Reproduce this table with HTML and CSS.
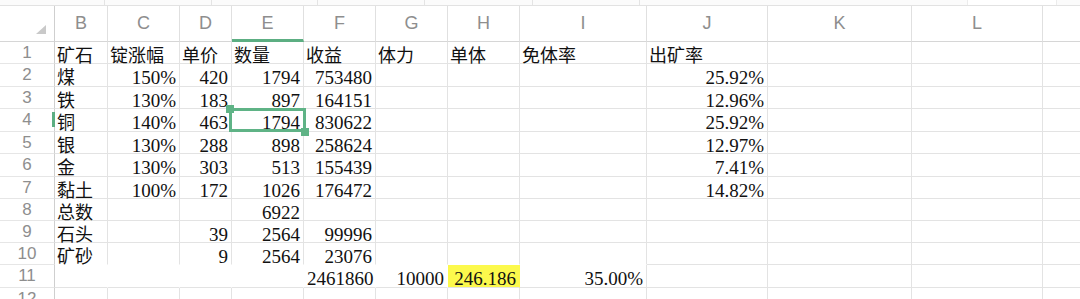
FILE: index.html
```html
<!DOCTYPE html>
<html lang="zh">
<head>
<meta charset="utf-8">
<title>Sheet</title>
<link rel="stylesheet" href="styles.css">
</head>
<body>
<div class="bar"><span class="s1"></span><span class="s2"></span><span class="s3"></span><span class="s4"></span><span class="s5"></span><span class="s6"></span><span class="fill"></span><span class="box"></span></div>
<div class="sheet">
  <div class="h corner"><span class="tri"></span></div>
  <div class="h">B</div><div class="h">C</div><div class="h">D</div><div class="h sel">E</div><div class="h">F</div><div class="h">G</div><div class="h">H</div><div class="h">I</div><div class="h">J</div><div class="h">K</div><div class="h">L</div><div class="h last"></div>

  <div class="r">1</div>
  <div class="c t">矿石</div><div class="c t">锭涨幅</div><div class="c t">单价</div><div class="c t">数量</div><div class="c t">收益</div><div class="c t">体力</div><div class="c t">单体</div><div class="c t">免体率</div><div class="c t">出矿率</div><div class="c"></div><div class="c"></div><div class="c last"></div>

  <div class="r">2</div>
  <div class="c t">煤</div><div class="c n">150%</div><div class="c n">420</div><div class="c n">1794</div><div class="c n">753480</div><div class="c"></div><div class="c"></div><div class="c"></div><div class="c n">25.92%</div><div class="c"></div><div class="c"></div><div class="c last"></div>

  <div class="r">3</div>
  <div class="c t">铁</div><div class="c n">130%</div><div class="c n">183</div><div class="c n">897</div><div class="c n">164151</div><div class="c"></div><div class="c"></div><div class="c"></div><div class="c n">12.96%</div><div class="c"></div><div class="c"></div><div class="c last"></div>

  <div class="r rsel">4</div>
  <div class="c t">铜</div><div class="c n">140%</div><div class="c n">463</div><div class="c n">1794</div><div class="c n">830622</div><div class="c"></div><div class="c"></div><div class="c"></div><div class="c n">25.92%</div><div class="c"></div><div class="c"></div><div class="c last"></div>

  <div class="r">5</div>
  <div class="c t">银</div><div class="c n">130%</div><div class="c n">288</div><div class="c n">898</div><div class="c n">258624</div><div class="c"></div><div class="c"></div><div class="c"></div><div class="c n">12.97%</div><div class="c"></div><div class="c"></div><div class="c last"></div>

  <div class="r">6</div>
  <div class="c t">金</div><div class="c n">130%</div><div class="c n">303</div><div class="c n">513</div><div class="c n">155439</div><div class="c"></div><div class="c"></div><div class="c"></div><div class="c n">7.41%</div><div class="c"></div><div class="c"></div><div class="c last"></div>

  <div class="r">7</div>
  <div class="c t">黏土</div><div class="c n">100%</div><div class="c n">172</div><div class="c n">1026</div><div class="c n">176472</div><div class="c"></div><div class="c"></div><div class="c"></div><div class="c n">14.82%</div><div class="c"></div><div class="c"></div><div class="c last"></div>

  <div class="r">8</div>
  <div class="c t">总数</div><div class="c"></div><div class="c"></div><div class="c n">6922</div><div class="c"></div><div class="c"></div><div class="c"></div><div class="c"></div><div class="c"></div><div class="c"></div><div class="c"></div><div class="c last"></div>

  <div class="r">9</div>
  <div class="c t">石头</div><div class="c"></div><div class="c n">39</div><div class="c n">2564</div><div class="c n">99996</div><div class="c"></div><div class="c"></div><div class="c"></div><div class="c"></div><div class="c"></div><div class="c"></div><div class="c last"></div>

  <div class="r">10</div>
  <div class="c t nb">矿砂</div><div class="c nb"></div><div class="c n nb">9</div><div class="c n nb">2564</div><div class="c n nb">23076</div><div class="c nb"></div><div class="c nb"></div><div class="c nb"></div><div class="c"></div><div class="c"></div><div class="c"></div><div class="c last"></div>

  <div class="r">11</div>
  <div class="c w"></div><div class="c w"></div><div class="c w"></div><div class="c w"></div><div class="c n w">2461860</div><div class="c n w">10000</div><div class="c n w yellow">246.186</div><div class="c n">35.00%</div><div class="c"></div><div class="c"></div><div class="c"></div><div class="c last"></div>

  <div class="r">12</div>
  <div class="c"></div><div class="c"></div><div class="c"></div><div class="c"></div><div class="c"></div><div class="c"></div><div class="c"></div><div class="c"></div><div class="c"></div><div class="c"></div><div class="c"></div><div class="c last"></div>

  <div class="selbox"></div>
  <div class="handle tl"></div>
  <div class="handle br"></div>
</div>
</body>
</html>
```
FILE: styles.css
```css
* { box-sizing: border-box; }
html, body { margin: 0; padding: 0; }
body {
  width: 1080px;
  height: 299px;
  overflow: hidden;
  background: #fff;
  font-family: "Liberation Sans", Arial, sans-serif;
}
.bar {
  height: 6px;
  display: flex;
  background: #fbfbfb;
  border-bottom: 1px solid #e2e2e2;
}
.bar span { border-right: 1px solid #e4e4e4; }
.bar .s1 { width: 105px; }
.bar .s2 { width: 107px; }
.bar .s3 { width: 106px; }
.bar .s4 { width: 107px; }
.bar .s5 { width: 108px; }
.bar .s6 { width: 107px; }
.bar .fill { width: 327px; border-right: none; }
.bar .box { width: 90px; border-left: 1px solid #ececec; border-right: 1px solid #ececec; background: #fff; }

.sheet {
  position: relative;
  display: grid;
  grid-template-columns: 55px 53px 72px 52px 72px 72px 72px 72px 127px 121px 144px 131px 37px;
  grid-template-rows: 36px 22px 23px 22px 23px 22px 23px 22px 22px 22px 22px 23px 22px;
}
.h {
  border-right: 1px solid #e0e0e0;
  border-bottom: 1px solid #d6d6d6;
  color: #8e8e8e;
  font-size: 18px;
  line-height: 35px;
  text-align: center;
}
.h.sel { border-bottom: 3px solid #5cae82; }
.h.last, .c.last { border-right: none; }
.corner {
  display: flex;
  justify-content: flex-end;
  align-items: flex-end;
  padding: 0 8px 7px 0;
  border-right-color: #cfcfcf;
}
.tri {
  width: 10px;
  height: 9px;
  background: #c9c9c9;
  clip-path: polygon(100% 0, 100% 100%, 0 100%);
}
.r {
  border-right: 1px solid #cfcfcf;
  border-bottom: 1px solid #e6e6e6;
  color: #8e8e8e;
  font-size: 17px;
  line-height: 21px;
  text-align: center;
}
.rsel { position: relative; }
.rsel::after {
  content: "";
  position: absolute;
  right: -1px;
  top: 3px;
  width: 3px;
  height: 15px;
  background: #5cae82;
}
.c {
  border-right: 1px solid #e3e3e3;
  border-bottom: 1px solid #e3e3e3;
  padding: 0 3px;
  white-space: nowrap;
  color: #111;
  font-family: "Liberation Serif", "Times New Roman", serif;
  font-size: 19px;
  line-height: 18px;
  text-align: right;
}
.c.n { padding-top: 5px; }
.c.t {
  font-family: "Noto Sans CJK SC", sans-serif;
  font-size: 18px;
  line-height: 18px;
  padding-top: 3px;
  text-align: left;
  padding-left: 2px;
}
.c.nb { border-bottom-color: transparent; }
.c.w { border-right-color: transparent; }
.c.yellow { background: #fcf94c; }

.selbox {
  position: absolute;
  left: 229px;
  top: 102px;
  width: 77px;
  height: 24px;
  border: 3px solid #5fb386;
}
.handle {
  position: absolute;
  background: #5fb386;
}
.handle.tl { left: 226px; top: 99px; width: 8px; height: 8px; }
.handle.br { left: 301px; top: 122px; width: 8px; height: 8px; }
```
